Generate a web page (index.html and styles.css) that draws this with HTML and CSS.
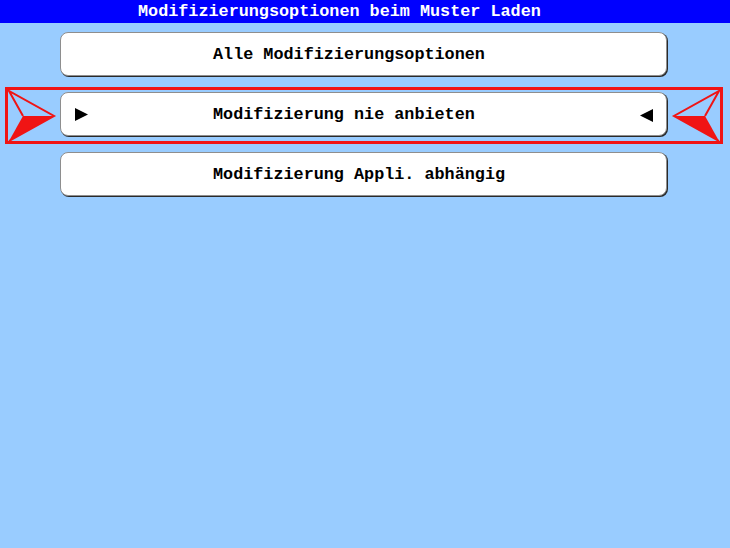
FILE: index.html
```html
<!DOCTYPE html>
<html lang="de">
<head>
<meta charset="utf-8">
<title>Modifizierungsoptionen</title>
<link rel="stylesheet" href="styles.css">
</head>
<body>
<div class="header"><span class="title">Modifizierungsoptionen beim Muster Laden</span></div>
<div class="list">
  <div class="row">
    <div class="side"></div>
    <div class="btn"><span class="label">Alle Modifizierungsoptionen</span></div>
    <div class="side"></div>
  </div>
  <div class="row selected">
    <div class="side">
      <svg class="pointer" width="52" height="51" viewBox="0 0 52 51">
        <polygon points="15,26 46,26 1,51" fill="#f01414"/>
        <polyline points="1,51 46,26 1,1 15,26" fill="none" stroke="#f01414" stroke-width="2" stroke-linejoin="miter"/>
      </svg>
    </div>
    <div class="btn">
      <svg class="tri" width="13" height="13" viewBox="0 0 13 13"><polygon points="0,0 13,6.5 0,13" fill="#000"/></svg>
      <span class="label">Modifizierung nie anbieten</span>
      <svg class="tri tri-right" width="13" height="13" viewBox="0 0 13 13"><polygon points="13,0 0,6.5 13,13" fill="#000"/></svg>
    </div>
    <div class="side">
      <svg class="pointer" width="53" height="51" viewBox="0 0 53 51">
        <polygon points="38,26 7,26 52,51" fill="#f01414"/>
        <polyline points="52,51 7,26 52,1 38,26" fill="none" stroke="#f01414" stroke-width="2" stroke-linejoin="miter"/>
      </svg>
    </div>
  </div>
  <div class="row">
    <div class="side"></div>
    <div class="btn"><span class="label">Modifizierung Appli. abhängig</span></div>
    <div class="side"></div>
  </div>
</div>
</body>
</html>
```
FILE: styles.css
```css
html, body {
  margin: 0;
  padding: 0;
}
body {
  width: 730px;
  height: 548px;
  background: #99ccff;
  font-family: "Liberation Mono", "Courier New", monospace;
  font-weight: bold;
  font-size: 16.8px;
  overflow: hidden;
}
.header {
  height: 23px;
  background: #0000ff;
  color: #ffffff;
  display: flex;
  align-items: center;
  padding-left: 138px;
  line-height: 23px;
}
.list {
  display: flex;
  flex-direction: column;
  gap: 3px;
  padding: 4px 0 0 5px;
}
.row {
  width: 712px;
  height: 51px;
  border: 3px solid transparent;
  display: grid;
  grid-template-columns: 52px 607px 53px;
}
.row.selected {
  border-color: #f01414;
}
.side {
  display: flex;
}
.pointer {
  display: block;
}
.btn {
  position: relative;
  margin-top: 2px;
  box-sizing: border-box;
  height: 44px;
  background: #ffffff;
  border: 1px solid #8e8e8e;
  border-radius: 8px;
  box-shadow: 1px 1px 0 #2a2a2a;
  display: flex;
  align-items: center;
  color: #000000;
}
.label {
  padding-left: 152px;
  white-space: pre;
}
.tri {
  position: absolute;
  left: 14px;
  top: 15px;
  display: block;
}
.tri-right {
  left: auto;
  right: 13px;
  top: 16px;
}
```
